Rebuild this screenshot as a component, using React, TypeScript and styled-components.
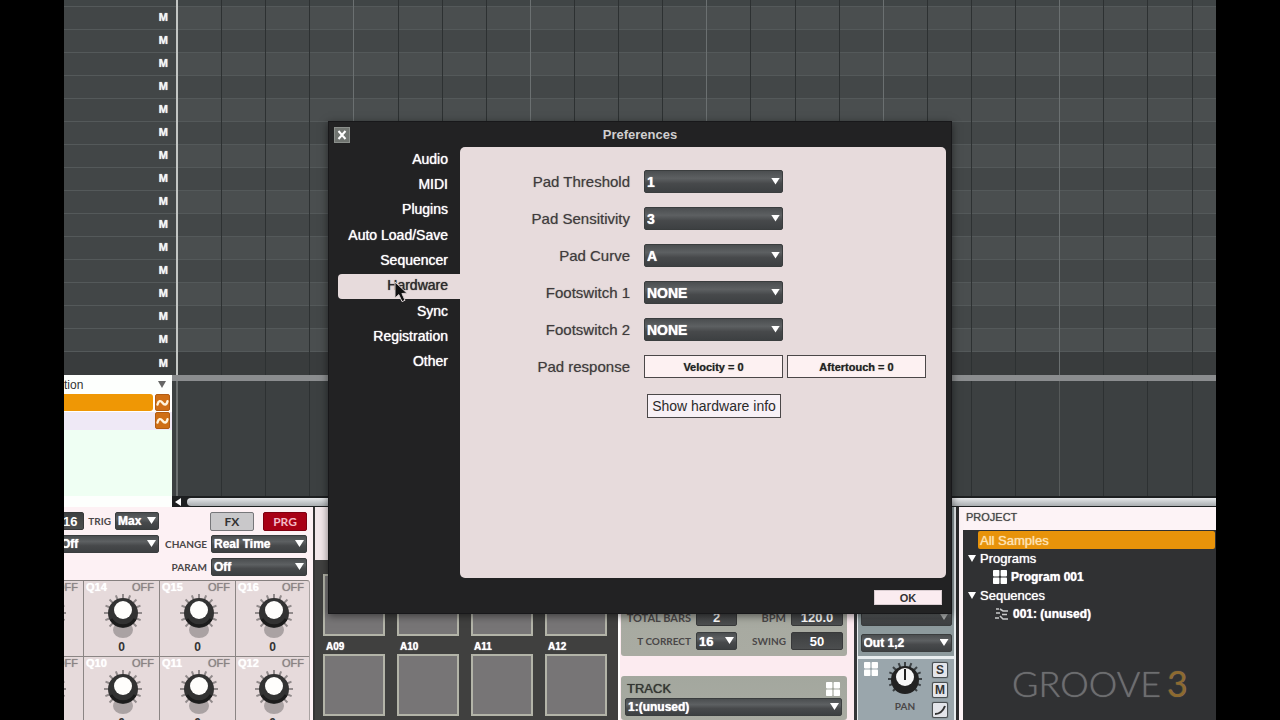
import React from "react";
import styled, { createGlobalStyle, css } from "styled-components";

const GlobalStyle = createGlobalStyle`
  * { box-sizing: border-box; }
  body {
    margin: 0;
    background: #000;
    font-family: "Liberation Sans", Arial, Helvetica, sans-serif;
    overflow: hidden;
  }
  button, select { font-family: inherit; margin: 0; }
  h1, h2, ul, p { margin: 0; padding: 0; }
  ul { list-style: none; }
`;

const Stage = styled.main`
  position: relative;
  display: flex;
  flex-direction: column;
  height: 100vh;
  margin: 0 64px;
  overflow: hidden;
  background: #3c4041;
`;

/* ---------- Arranger ---------- */

const Arranger = styled.section`
  position: relative;
  flex: none;
  padding-top: 6px;
  background: #404546;
`;

const TrackRow = styled.div<{ $tone: "light" | "dark" | "last" }>`
  display: grid;
  grid-template-columns: 112px 1fr;
  height: ${(p) => (p.$tone === "last" ? 24 : 23)}px;
  background: ${(p) => ({ light: "#4a4e4f", dark: "#434748", last: "#393c3d" })[p.$tone]};
  border-top: 1px solid #54595a;
`;

const TrackHead = styled.div<{ $last?: boolean }>`
  display: flex;
  align-items: center;
  justify-content: flex-end;
  padding: 0 8px 2px 0;
  background: ${(p) => (p.$last ? "#393c3d" : "#424647")};
`;

const MuteButton = styled.button`
  padding: 0;
  border: 0;
  background: none;
  color: #f4f6f4;
  font-size: 11px;
  line-height: 12px;
  font-weight: 700;
  text-shadow: 0 0 1px #fff;
`;

const GridLines = styled.div<{ $faint?: boolean }>`
  position: absolute;
  inset: 0 0 0 112px;
  display: flex;
  overflow: hidden;
  pointer-events: none;
  border-left: 2px solid ${(p) => (p.$faint ? "#6c7070" : "#c3c6c4")};
`;

const Bar = styled.div<{ $faint?: boolean }>`
  flex: 0 0 17%;
  display: flex;
  border-right: 1px solid ${(p) => (p.$faint ? "#565a5a" : "#6b7071")};
`;

const Beat = styled.div`
  flex: 1;
  & + & { border-left: 1px solid #2d3132; }
`;

/* ---------- Automation lane ---------- */

const Lane = styled.section`
  flex: none;
  display: grid;
  grid-template-columns: 108px 1fr;
  height: 132px;
`;

const LaneSide = styled.div`
  display: flex;
  flex-direction: column;
  background: #fdfffd;
`;

const LaneHeader = styled.div`
  display: flex;
  align-items: center;
  justify-content: space-between;
  height: 19px;
  padding-right: 6px;
  color: #333;
  font-size: 12px;
`;

const LaneRow = styled.div<{ $active?: boolean }>`
  display: flex;
  gap: 2px;
  height: 18px;
  padding: 0 2px 1px 0;
  background: ${(p) => (p.$active ? "#fff" : "#efe9f6")};
`;

const LaneFill = styled.div<{ $active?: boolean }>`
  flex: 1;
  border-radius: 0 3px 3px 0;
  background: ${(p) => (p.$active ? "#ef9705" : "transparent")};
`;

const CurveButton = styled.button`
  width: 15px;
  padding: 0;
  border: 1px solid #b35c12;
  border-radius: 2px;
  background: #cf6f16;
  display: grid;
  place-items: center;
`;

const LaneEmpty = styled.div`
  flex: 0 0 66px;
  background: #effff3;
`;

const LaneBody = styled.div`
  display: flex;
  flex-direction: column;
  background: #3c4041;
`;

const Splitter = styled.div`
  height: 6px;
  background: #8b8d8f;
`;

const LaneGrid = styled.div`
  position: relative;
  flex: 1;
  & > div { left: 4px; }
`;

const ScrollBar = styled.div`
  display: flex;
  align-items: center;
  gap: 5px;
  height: 11px;
  padding-left: 2px;
  background: #1d1f20;
`;

const ScrollThumb = styled.div`
  flex: 1;
  height: 8px;
  border-radius: 4px 0 0 4px;
  background: linear-gradient(#e6e8ea, #a9adb0);
`;

/* ---------- Shared controls ---------- */

const SelectWrap = styled.span<{ $w: number; $h: number; $dim?: boolean }>`
  position: relative;
  display: block;
  flex: none;
  width: ${(p) => p.$w}px;
  height: ${(p) => p.$h}px;
  &::after {
    content: "";
    position: absolute;
    right: 3px;
    top: calc(50% - 4px);
    width: 9px;
    height: 7px;
    background: ${(p) => (p.$dim ? "#b5b8b8" : "#fff")};
    clip-path: polygon(0 0, 100% 0, 50% 100%);
    pointer-events: none;
  }
`;

const NativeSelect = styled.select<{ $size: number }>`
  appearance: none;
  display: block;
  width: 100%;
  height: 100%;
  padding: 0 14px 0 2px;
  border: 1px solid #3a3d3e;
  border-radius: 2px;
  background: linear-gradient(#4b4e50, #5d6062 35%, #47494b 60%, #3d4042);
  color: #fff;
  font-size: ${(p) => p.$size}px;
  font-weight: 700;
  text-shadow: 0 0 1px #fff;
`;

function Select(props: { label: string; value?: string; w: number; h?: number; size?: number; dim?: boolean; id?: string }) {
  const { label, value = "", w, h = 18, size = 12, dim, id } = props;
  return (
    <SelectWrap $w={w} $h={h} $dim={dim}>
      <NativeSelect id={id} $size={size} aria-label={id ? undefined : label} defaultValue={value}>
        <option value={value}>{value}</option>
      </NativeSelect>
    </SelectWrap>
  );
}

const NumberBox = styled.input<{ $w: number }>`
  flex: none;
  width: ${(p) => p.$w}px;
  height: 18px;
  padding: 0;
  border: 1px solid #38393a;
  border-radius: 2px;
  background: linear-gradient(#3e4041, #4c4e4f);
  color: #fff;
  font-family: inherit;
  font-size: 13px;
  font-weight: 700;
  text-align: center;
`;

const Caption = styled.span<{ $small?: boolean }>`
  color: #4a4748;
  font-family: Lato, "Liberation Sans", sans-serif;
  font-size: ${(p) => (p.$small ? 10 : 11)}px;
  font-weight: 700;
  white-space: nowrap;
`;

const PadsIcon = ({ size = 14, color = "#fff" }: { size?: number; color?: string }) => (
  <svg width={size} height={size} viewBox="0 0 14 14" fill={color} aria-hidden="true">
    <rect x="0" y="0" width="6.4" height="6.4" rx="0.8" />
    <rect x="7.6" y="0" width="6.4" height="6.4" rx="0.8" />
    <rect x="0" y="7.6" width="6.4" height="6.4" rx="0.8" />
    <rect x="7.6" y="7.6" width="6.4" height="6.4" rx="0.8" />
  </svg>
);

/* ---------- Lower section ---------- */

const Lower = styled.section`
  flex: 1;
  min-height: 0;
  display: flex;
  overflow: hidden;
  background: #fbf3f6;
`;

const QLinks = styled.section`
  flex: none;
  width: 249px;
  display: flex;
  flex-direction: column;
  align-items: flex-end;
  gap: 4px;
  padding: 5px 3px 0 0;
  overflow: hidden;
  background: #fdf1f4;
`;

const QControls = styled.div`
  display: grid;
  grid-template-columns: 101px 148px;
  justify-content: end;
  gap: 5px 0;
  padding-right: 3px;
`;

const QControlRow = styled.div`
  display: flex;
  align-items: center;
  justify-content: flex-end;
  gap: 4px;
  height: 18px;
`;

const ModeButton = styled.button<{ $on?: boolean }>`
  width: 44px;
  height: 19px;
  padding: 0;
  border: 1px solid ${(p) => (p.$on ? "#7d0010" : "#77777a")};
  border-radius: 2px;
  background: ${(p) => (p.$on ? "#a80015" : "#c9c8ca")};
  color: ${(p) => (p.$on ? "#f3b9c4" : "#333")};
  font-family: Lato, sans-serif;
  font-size: 12px;
  font-weight: 700;
  & + & { margin-left: 5px; }
`;

const QGrid = styled.div`
  flex: none;
  display: grid;
  grid-template-columns: 76px 76px 76px 74px;
  grid-auto-rows: 76px;
  border-top: 1px solid #86807f;
  border-right: 1px solid #a9a3a2;
  border-radius: 0 3px 0 0;
  background: #e6dadb;
`;

const QCell = styled.div`
  display: flex;
  flex-direction: column;
  align-items: center;
  padding: 0 2px;
  border-left: 1px solid #8b8584;
  border-bottom: 1px solid #8b8584;
`;

const QHead = styled.div`
  align-self: stretch;
  display: flex;
  justify-content: space-between;
  padding-right: 3px;
  font-size: 11px;
  line-height: 12px;
  color: #8a8384;
  text-shadow: 0 0 1px #8a8384;
  b { color: #fff; text-shadow: 0 0 1px #fff; }
`;

const QValue = styled.span`
  color: #333;
  font-size: 12px;
  line-height: 14px;
  font-weight: 700;
`;

const tickAngles = [-135, -112, -90, -67, -45, -22, 0, 22, 45, 67, 90, 112, 135];

const Knob = () => (
  <svg width="50" height="47" viewBox="0 0 50 47" aria-hidden="true">
    <ellipse cx="26" cy="37" rx="10" ry="8" fill="#aaa2a3" />
    {tickAngles.map((a) => (
      <line key={a} x1="26" y1="1" x2="26" y2="6" stroke="#918a8b" strokeWidth="2" transform={`rotate(${a} 26 20)`} />
    ))}
    <circle cx="26" cy="20" r="15" fill="#323232" />
    <path d="M14 26 A14 14 0 0 0 38 26" fill="none" stroke="#1c1c1c" strokeWidth="3" />
    <circle cx="26" cy="17" r="9" fill="#fffefc" />
  </svg>
);

const Pads = styled.section`
  flex: none;
  width: 305px;
  border-left: 2px solid #343434;
  background: #40403f;
`;

const PadsHeader = styled.div`
  height: 53px;
  background: #f3e8eb;
`;

const PadGrid = styled.div`
  display: grid;
  grid-template-columns: repeat(4, 62px);
  gap: 4px 12px;
  padding-left: 8px;
`;

const PadCell = styled.div`
  display: flex;
  flex-direction: column;
  font-size: 10px;
  line-height: 14px;
  font-weight: 700;
  color: #fff;
  text-shadow: 0 0 1px #fff;
  span { padding-left: 3px; }
`;

const Pad = styled.button`
  width: 62px;
  height: 62px;
  padding: 0;
  border: 2px solid #b3b4a8;
  background: #777576;
`;

const Transport = styled.section`
  flex: none;
  width: 236px;
  display: flex;
  flex-direction: column;
  gap: 20px;
  padding: 0 7px 0 1px;
  border-left: 2px solid #fff;
  background: #fcebf0;
`;

const Plate = styled.div<{ $fill?: boolean }>`
  display: flex;
  flex-direction: column;
  border-radius: 3px;
  background: linear-gradient(#a3a79e, #a9aba2);
  ${(p) =>
    p.$fill
      ? css`flex: 1; padding: 4px 5px 0 4px; gap: 1px;`
      : css`flex: 0 0 149px; justify-content: flex-end; gap: 6px; padding: 0 4px 6px 0;`}
`;

const TransportRow = styled.div`
  display: grid;
  grid-template-columns: 1fr 41px 44px 52px;
  column-gap: 5px;
  align-items: center;
  justify-items: end;
`;

const TrackTitle = styled.div`
  display: flex;
  justify-content: space-between;
  align-items: center;
  height: 17px;
  padding: 0 2px;
  color: #333532;
  font-size: 13px;
  text-shadow: 0 0 1px #333532;
`;

const Channel = styled.section`
  flex: none;
  width: 105px;
  display: flex;
  flex-direction: column;
  gap: 3px;
  padding: 0 2px 0 1px;
  border-left: 3px solid #343638;
  border-right: 3px solid #2a2a2c;
  background: #e9eef0;
`;

const ChannelTop = styled.div`
  flex: 0 0 149px;
  display: flex;
  flex-direction: column;
  justify-content: flex-end;
  align-items: center;
  gap: 8px;
  padding-bottom: 4px;
  background: #8d9a9d;
`;

const ChannelStrip = styled.div`
  flex: 1;
  display: grid;
  grid-template-columns: 14px 46px 16px;
  justify-content: space-between;
  padding: 3px 6px 0 6px;
  background: #9aa6ac;
`;

const PanBlock = styled.div`
  display: flex;
  flex-direction: column;
  align-items: center;
`;

const StripButtons = styled.div`
  display: flex;
  flex-direction: column;
  gap: 4px;
`;

const StripButton = styled.button`
  display: grid;
  place-items: center;
  width: 16px;
  height: 16px;
  padding: 0;
  border: 1px solid #4a5053;
  border-radius: 2px;
  background: #e3e5ea;
  color: #333;
  font-size: 12px;
  line-height: 12px;
  font-weight: 700;
  box-shadow: 0 0 1px #333;
`;

const Project = styled.section`
  flex: 1;
  min-width: 0;
  display: flex;
  flex-direction: column;
  padding-left: 4px;
  background: #fdf3f6;
`;

const ProjectTitle = styled.h2`
  height: 23px;
  padding-left: 3px;
  color: #444;
  font-size: 11px;
  line-height: 21px;
  font-weight: 400;
  text-shadow: 0 0 1px #777;
`;

const ProjectBody = styled.div`
  flex: 1;
  padding: 1px 1px 0 5px;
  background: #303133;
`;

const Tree = styled.ul`
  display: flex;
  flex-direction: column;
  height: 92px;
`;

const TreeItem = styled.li<{ $level: number; $active?: boolean }>`
  flex: 1;
  display: flex;
  align-items: center;
  gap: 4px;
  margin-left: ${(p) => [10, 0, 25][p.$level]}px;
  padding-left: ${(p) => (p.$active ? 2 : 0)}px;
  border-radius: 2px;
  background: ${(p) => (p.$active ? "#e8930a" : "none")};
  color: ${(p) => (p.$active ? "#fde3b4" : "#fff")};
  font-size: ${(p) => (p.$level === 2 ? 12 : 13)}px;
  font-weight: ${(p) => (p.$level === 2 ? 700 : 400)};
  text-shadow: 0 0 1px currentColor;
`;

const Triangle = styled.span<{ $color?: string }>`
  width: 8px;
  height: 7px;
  background: ${(p) => p.$color ?? "#fff"};
  clip-path: polygon(0 0, 100% 0, 50% 100%);
`;

const Watermark = styled.p`
  position: absolute;
  right: 28px;
  bottom: 14px;
  color: #6d6e70;
  font-family: Lato, "Open Sans", sans-serif;
  font-size: 36px;
  line-height: 46px;
  font-weight: 300;
  text-shadow: 0 0 1px #6d6e70;
  span { margin-left: 6px; color: #8d6a30; font-weight: 400; }
`;

/* ---------- Preferences dialog ---------- */

const DialogLayer = styled.div`
  position: absolute;
  inset: 121px 0 auto;
  display: flex;
  justify-content: center;
`;

const Dialog = styled.div`
  width: 624px;
  background: #222223;
  border: 1px solid #18181a;
  box-shadow: 0 2px 8px rgba(0, 0, 0, 0.5);
`;

const TitleBar = styled.header`
  display: grid;
  grid-template-columns: 16px 1fr 16px;
  align-items: center;
  height: 25px;
  padding: 0 5px;
  h1 {
    color: #d0cecf;
    font-size: 13px;
    font-weight: 700;
    text-align: center;
  }
`;

const CloseButton = styled.button`
  display: grid;
  place-items: center;
  width: 16px;
  height: 16px;
  padding: 0;
  border: 1px solid #8b8f8b;
  background: #707470;
`;

const DialogBody = styled.div`
  display: grid;
  grid-template-columns: 122px 1fr;
  padding: 0 5px 0 9px;
`;

const Nav = styled.nav`
  display: flex;
  flex-direction: column;
  height: 228px;
`;

const NavItem = styled.button<{ $active?: boolean }>`
  position: relative;
  flex: 1;
  padding: 0 12px 2px 0;
  border: 0;
  border-radius: 4px 0 0 4px;
  background: ${(p) => (p.$active ? "#e7dbdc" : "none")};
  color: ${(p) => (p.$active ? "#2d2b2c" : "#fff")};
  font-size: 14px;
  text-align: right;
  text-shadow: 0 0 1px currentColor;
`;

const Cursor = styled.svg`
  position: absolute;
  left: 56px;
  top: 7px;
`;

const Panel = styled.section`
  height: 431px;
  padding: 23px 20px 0 0;
  border-radius: 5px;
  background: #e7dbdc;
`;

const Form = styled.form`
  display: flex;
  flex-direction: column;
  gap: 14px;
`;

const FieldLabel = styled.label`
  color: #3f3b3c;
  font-size: 15px;
  text-align: right;
  text-shadow: 0 0 1px #8d8889;
`;

const ButtonPair = styled.div`
  display: flex;
  gap: 4px;
`;

const FormRow = styled.div`
  display: grid;
  grid-template-columns: 170px 1fr;
  column-gap: 14px;
  align-items: center;
  height: 23px;
`;

const ResponseButton = styled.button`
  width: 139px;
  height: 23px;
  padding: 0;
  border: 1px solid #4b4748;
  background: #fdf1f2;
  color: #222;
  font-size: 11px;
  font-weight: 700;
  text-shadow: 0 0 1px #777;
`;

const InfoButton = styled.button`
  display: block;
  width: 134px;
  height: 24px;
  margin: 16px 0 0 187px;
  padding: 0;
  border: 1px solid #4b4748;
  background: #f8f1f6;
  color: #2c2a2b;
  font-size: 14px;
  white-space: nowrap;
`;

const DialogFooter = styled.footer`
  display: flex;
  justify-content: flex-end;
  padding: 12px 9px 8px;
`;

const OkButton = styled.button`
  width: 68px;
  height: 15px;
  padding: 0;
  border: 1px solid #d9ccd0;
  background: #fbecf0;
  color: #333;
  font-size: 11px;
  line-height: 12px;
  font-weight: 700;
`;

const tabs = ["Audio", "MIDI", "Plugins", "Auto Load/Save", "Sequencer", "Hardware", "Sync", "Registration", "Other"];
const fields = [
  ["Pad Threshold", "1"],
  ["Pad Sensitivity", "3"],
  ["Pad Curve", "A"],
  ["Footswitch 1", "NONE"],
  ["Footswitch 2", "NONE"],
];
const qlinks = ["", "Q14", "Q15", "Q16", "", "Q10", "Q11", "Q12"];
const padRows = ["", "", "", "", "A09", "A10", "A11", "A12"];

function Lines({ faint }: { faint?: boolean }) {
  return (
    <GridLines $faint={faint}>
      {[0, 1, 2, 3, 4, 5].map((bar) => (
        <Bar key={bar} $faint={faint}>
          <Beat /><Beat /><Beat /><Beat />
        </Bar>
      ))}
    </GridLines>
  );
}

const CurveIcon = () => (
  <svg width="13" height="10" viewBox="0 0 13 10" fill="none" stroke="#fff3dc" strokeWidth="2.4" strokeLinecap="round" aria-hidden="true">
    <path d="M1.5 6.5 C2.5 2.5 4.6 2.2 6.5 4.8 S10.5 7.3 11.5 3.2" />
  </svg>
);

function Preferences() {
  return (
    <DialogLayer>
      <Dialog role="dialog" aria-labelledby="prefs-title">
        <TitleBar>
          <CloseButton aria-label="Close">
            <svg width="10" height="10" viewBox="0 0 10 10" stroke="#fff" strokeWidth="2" aria-hidden="true">
              <path d="M1.5 1 L8.5 9 M8.5 1 L1.5 9" />
            </svg>
          </CloseButton>
          <h1 id="prefs-title">Preferences</h1>
        </TitleBar>
        <DialogBody>
          <Nav>
            {tabs.map((tab) => (
              <NavItem key={tab} $active={tab === "Hardware"}>
                {tab}
                {tab === "Hardware" && (
                  <Cursor width="15" height="22" viewBox="0 0 15 22" aria-hidden="true">
                    <path d="M1 1 V17 L4.8 13.6 L8 20.6 L11 19.3 L7.9 12.5 L13 12.2 Z" fill="#111" stroke="#d9d0d1" strokeWidth="1" />
                  </Cursor>
                )}
              </NavItem>
            ))}
          </Nav>
          <Panel>
            <Form>
              {fields.map(([label, value], i) => (
                <FormRow key={label}>
                  <FieldLabel htmlFor={`field-${i}`}>{label}</FieldLabel>
                  <Select id={`field-${i}`} label={label} value={value} w={139} h={23} size={14} />
                </FormRow>
              ))}
              <FormRow>
                <FieldLabel htmlFor="velocity">Pad response</FieldLabel>
                <ButtonPair>
                  <ResponseButton id="velocity" type="button">Velocity = 0</ResponseButton>
                  <ResponseButton type="button">Aftertouch = 0</ResponseButton>
                </ButtonPair>
              </FormRow>
            </Form>
            <InfoButton type="button">Show hardware info</InfoButton>
          </Panel>
        </DialogBody>
        <DialogFooter>
          <OkButton>OK</OkButton>
        </DialogFooter>
      </Dialog>
    </DialogLayer>
  );
}

export default function App() {
  return (
    <>
      <GlobalStyle />
      <Stage>
        <Arranger>
          {Array.from({ length: 16 }, (_, i) => (
            <TrackRow key={i} $tone={i === 15 ? "last" : i % 2 ? "dark" : "light"}>
              <TrackHead $last={i === 15}>
                <MuteButton>M</MuteButton>
              </TrackHead>
            </TrackRow>
          ))}
          <Lines />
        </Arranger>

        <Lane>
          <LaneSide>
            <LaneHeader>
              <span>tion</span>
              <Triangle $color="#666" />
            </LaneHeader>
            <LaneRow $active>
              <LaneFill $active />
              <CurveButton aria-label="Curve"><CurveIcon /></CurveButton>
            </LaneRow>
            <LaneRow>
              <LaneFill />
              <CurveButton aria-label="Curve"><CurveIcon /></CurveButton>
            </LaneRow>
            <LaneEmpty />
          </LaneSide>
          <LaneBody>
            <Splitter />
            <LaneGrid><Lines faint /></LaneGrid>
            <ScrollBar>
              <svg width="8" height="8" viewBox="0 0 8 8" fill="#fff" aria-hidden="true"><path d="M7 0 V8 L1 4 Z" /></svg>
              <ScrollThumb />
            </ScrollBar>
          </LaneBody>
        </Lane>

        <Lower>
          <QLinks>
            <QControls>
              <QControlRow>
                <NumberBox $w={28} aria-label="Number" defaultValue="16" />
                <Caption $small>TRIG</Caption>
                <Select label="Trig" value="Max" w={44} />
              </QControlRow>
              <QControlRow>
                <ModeButton>FX</ModeButton>
                <ModeButton $on>PRG</ModeButton>
              </QControlRow>
              <QControlRow><Select label="Mode" value="Off" w={101} /></QControlRow>
              <QControlRow>
                <Caption $small>CHANGE</Caption>
                <Select label="Change" value="Real Time" w={96} />
              </QControlRow>
              <span />
              <QControlRow>
                <Caption $small>PARAM</Caption>
                <Select label="Param" value="Off" w={96} />
              </QControlRow>
            </QControls>
            <QGrid>
              {qlinks.map((q, i) => (
                <QCell key={i}>
                  <QHead><b>{q}</b>OFF</QHead>
                  <Knob />
                  {q && <QValue>0</QValue>}
                </QCell>
              ))}
            </QGrid>
          </QLinks>

          <Pads>
            <PadsHeader />
            <PadGrid>
              {padRows.map((p, i) => (
                <PadCell key={i}>
                  <span>{p || "\u00a0"}</span>
                  <Pad aria-label={`Pad ${i + 1}`} />
                </PadCell>
              ))}
            </PadGrid>
          </Pads>

          <Transport>
            <Plate>
              <TransportRow>
                <Caption>TOTAL BARS</Caption>
                <NumberBox $w={41} aria-label="Total bars" defaultValue="2" />
                <Caption>BPM</Caption>
                <NumberBox $w={52} aria-label="BPM" defaultValue="120.0" />
              </TransportRow>
              <TransportRow>
                <Caption $small>T CORRECT</Caption>
                <Select label="T correct" value="16" w={41} size={13} />
                <Caption $small>SWING</Caption>
                <NumberBox $w={52} aria-label="Swing" defaultValue="50" />
              </TransportRow>
            </Plate>
            <Plate $fill>
              <TrackTitle>TRACK<PadsIcon /></TrackTitle>
              <Select label="Track" value="1:(unused)" w={217} />
            </Plate>
          </Transport>

          <Channel>
            <ChannelTop>
              <Select label="Input" w={91} dim />
              <Select label="Output" value="Out 1,2" w={91} />
            </ChannelTop>
            <ChannelStrip>
              <PadsIcon />
              <PanBlock>
                <svg width="40" height="38" viewBox="0 0 40 38" aria-hidden="true">
                  {tickAngles.map((a) => (
                    <line key={a} x1="20" y1="0" x2="20" y2="5" stroke="#3c4144" strokeWidth="2" transform={`rotate(${a} 20 17)`} />
                  ))}
                  <circle cx="20" cy="18" r="14" fill="#222" />
                  <circle cx="20" cy="15" r="9" fill="#f7f7f7" />
                  <path d="M20 7 V18" stroke="#222" strokeWidth="2" />
                </svg>
                <Caption $small>PAN</Caption>
              </PanBlock>
              <StripButtons>
                <StripButton aria-label="Solo">S</StripButton>
                <StripButton aria-label="Mute">M</StripButton>
                <StripButton aria-label="Automation">
                  <svg width="12" height="12" viewBox="0 0 12 12" fill="none" stroke="#333" strokeWidth="2" aria-hidden="true">
                    <path d="M1 10 C6 10 9 7 11 2" />
                  </svg>
                </StripButton>
              </StripButtons>
            </ChannelStrip>
          </Channel>

          <Project>
            <ProjectTitle>PROJECT</ProjectTitle>
            <ProjectBody>
              <Tree>
                <TreeItem $level={0} $active>All Samples</TreeItem>
                <TreeItem $level={1}><Triangle />Programs</TreeItem>
                <TreeItem $level={2}><PadsIcon />Program 001</TreeItem>
                <TreeItem $level={1}><Triangle />Sequences</TreeItem>
                <TreeItem $level={2}>
                  <svg width="16" height="14" viewBox="0 0 16 14" fill="none" stroke="#c9cacb" strokeWidth="1.6" aria-hidden="true">
                    <path d="M3 2 H6 M3 6 H7 M2 11 H6 M7 2 L10 4 H15 M9 7.5 H14 M7 9 L10 12 H15" />
                  </svg>
                  001: (unused)
                </TreeItem>
              </Tree>
            </ProjectBody>
          </Project>
        </Lower>

        <Preferences />
        <Watermark>GROOVE<span>3</span></Watermark>
      </Stage>
    </>
  );
}
